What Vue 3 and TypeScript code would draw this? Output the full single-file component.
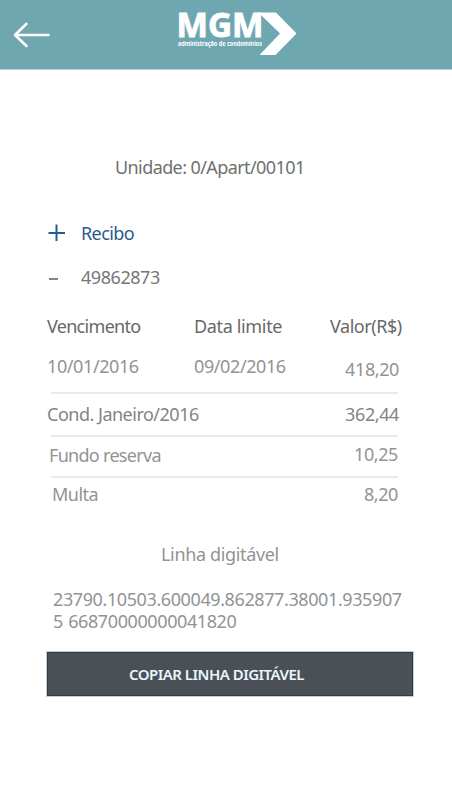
<script setup lang="ts">
interface Charge {
  key: string
  label: string
  value: string
}

const unit = 'Unidade: 0/Apart/00101'
const receipt = '49862873'
const dueDate = '10/01/2016'
const limitDate = '09/02/2016'
const total = '418,20'
const charges: Charge[] = [
  { key: 'cond', label: 'Cond. Janeiro/2016', value: '362,44' },
  { key: 'fundo', label: 'Fundo reserva', value: '10,25' },
  { key: 'multa', label: 'Multa', value: '8,20' },
]
const lineParts: string[] = ['23790.10503.600049.862877.38001.935907', '5 66870000000041820']
</script>

<template>
  <div class="screen">
    <header class="bar">
      <svg class="back" width="38" height="28" viewBox="0 0 38 28">
        <path d="M35.500 14H2.500M13.500 2.800L2 14L13.500 25" fill="none" stroke="#fff" stroke-width="2.600" stroke-linecap="round" stroke-linejoin="round" />
      </svg>
      <svg class="logo" width="124" height="60" viewBox="0 0 124 60">
        <path d="M83 12.500H102L122.500 33.500L101.500 55H85.500L106 33.500L88 16Z" fill="#fff" />
        <text class="brand" x="2.500" y="37.300" textLength="87" lengthAdjust="spacingAndGlyphs">MGM</text>
        <text class="tag" x="4" y="45.700" textLength="84" lengthAdjust="spacingAndGlyphs">administração de condomínios</text>
      </svg>
    </header>

    <main class="content">
      <p class="unit"><span>{{ unit }}</span></p>

      <div class="entry recibo">
        <svg class="sign" width="18" height="18" viewBox="0 0 18 18">
          <path d="M8.500 0.500V17M0.500 9H17" stroke="#285b8d" stroke-width="2" />
        </svg>
        <span class="recibo-text">Recibo</span>
      </div>
      <div class="entry number">
        <svg class="sign" width="18" height="18" viewBox="0 0 18 18">
          <path d="M1 10H10" stroke="#777" stroke-width="1.800" />
        </svg>
        <span class="receipt-text">{{ receipt }}</span>
      </div>

      <div class="row head">
        <span class="h-due">Vencimento</span>
        <span class="h-limit">Data limite</span>
        <span class="h-value">Valor(R$)</span>
      </div>
      <div class="row dates">
        <span class="date">{{ dueDate }}</span>
        <span class="date">{{ limitDate }}</span>
        <span class="value">{{ total }}</span>
      </div>

      <div v-for="c in charges" :key="c.key" class="charge" :class="c.key">
        <span class="label">{{ c.label }}</span>
        <span class="value">{{ c.value }}</span>
      </div>

      <p class="line-title"><span>Linha digitável</span></p>
      <div class="code">
        <div v-for="(part, i) in lineParts" :key="i">{{ part }}</div>
      </div>
      <button class="copy" type="button"><span>COPIAR LINHA DIGITÁVEL</span></button>
    </main>
  </div>
</template>

<style>
body {
  background: #fff;
}
</style>

<style scoped>
.screen {
  width: 452px;
  height: 800px;
  overflow: hidden;
  box-sizing: border-box;
  background: #fff;
  font-family: "Noto Sans", "Open Sans", sans-serif;
  font-size: 18px;
  line-height: 24px;
  color: #939393;
  white-space: nowrap;
}
.bar {
  display: flex;
  align-items: flex-start;
  height: 70px;
  box-sizing: border-box;
  background: #6ea7af;
  border-bottom: 1px solid #b5d5d9;
}
.back {
  margin: 21px 0 0 13px;
}
.logo {
  margin: 0 0 0 123px;
}
.brand {
  font-family: "Noto Sans", sans-serif;
  font-size: 34px;
  font-weight: 700;
  fill: #fff;
  stroke: #fff;
  stroke-width: 0.9px;
}
.tag {
  font-family: "Noto Sans", sans-serif;
  font-size: 6.2px;
  font-weight: 700;
  fill: #fff;
}
.content {
  display: flex;
  flex-direction: column;
}
p {
  margin: 0;
}
.unit {
  margin: 85px 0 0 115px;
  color: #707070;
  letter-spacing: -0.59px;
}
.entry {
  display: flex;
  align-items: flex-start;
  padding-left: 48px;
  gap: 15px;
}
.recibo {
  margin-top: 42px;
  color: #285b8d;
  letter-spacing: -0.6px;
}
.recibo .sign {
  margin-top: 3px;
}
.number {
  margin-top: 20px;
  color: #777;
  letter-spacing: -0.45px;
}
.number .sign {
  margin-top: 4px;
}
.row {
  display: grid;
  grid-template-columns: 147px 136px 1fr;
  padding-left: 47px;
}
.head {
  margin-top: 25px;
  color: #686868;
}
.h-due {
  letter-spacing: -0.7px;
}
.h-limit {
  letter-spacing: -0.35px;
}
.h-value {
  letter-spacing: -0.45px;
}
.dates {
  height: 38px;
  margin-top: 16px;
  padding-right: 53px;
}
.date {
  letter-spacing: -0.4px;
}
.value {
  text-align: right;
  letter-spacing: -0.4px;
}
.dates .value {
  padding-top: 3px;
}
.charge {
  display: flex;
  justify-content: space-between;
  box-sizing: border-box;
  width: 347px;
  margin-left: 51px;
  border-top: 2px solid #e9e9e9;
}
.cond {
  height: 43px;
  padding-top: 8px;
  color: #848484;
}
.cond .label {
  margin-left: -4px;
  letter-spacing: -0.5px;
}
.cond .value {
  margin-right: -1px;
}
.fundo {
  height: 41px;
  padding-top: 5px;
}
.fundo .label {
  margin: 1px 0 0 -2px;
  letter-spacing: -0.7px;
}
.multa {
  height: 41px;
  padding-top: 4px;
}
.multa .label {
  margin-left: 1px;
  letter-spacing: -0.5px;
}
.line-title {
  margin: 25px 0 0 161px;
  letter-spacing: -0.35px;
}
.code {
  margin: 22px 0 0 53px;
  line-height: 22px;
  letter-spacing: -0.4px;
}
.code div:last-child {
  letter-spacing: -0.4px;
  word-spacing: 1px;
}
.copy {
  display: block;
  width: 366px;
  height: 44px;
  margin: 20px 0 0 47px;
  padding: 0 0 0 81px;
  box-sizing: border-box;
  border: 1px solid #303c44;
  outline: 1px solid #c3d0d8;
  outline-offset: 0;
  background: #4a5056;
  color: #e9f6ff;
  font-family: "Noto Sans", sans-serif;
  font-size: 15px;
  font-weight: 600;
  line-height: 24px;
  letter-spacing: -0.52px;
  text-align: left;
}
</style>
